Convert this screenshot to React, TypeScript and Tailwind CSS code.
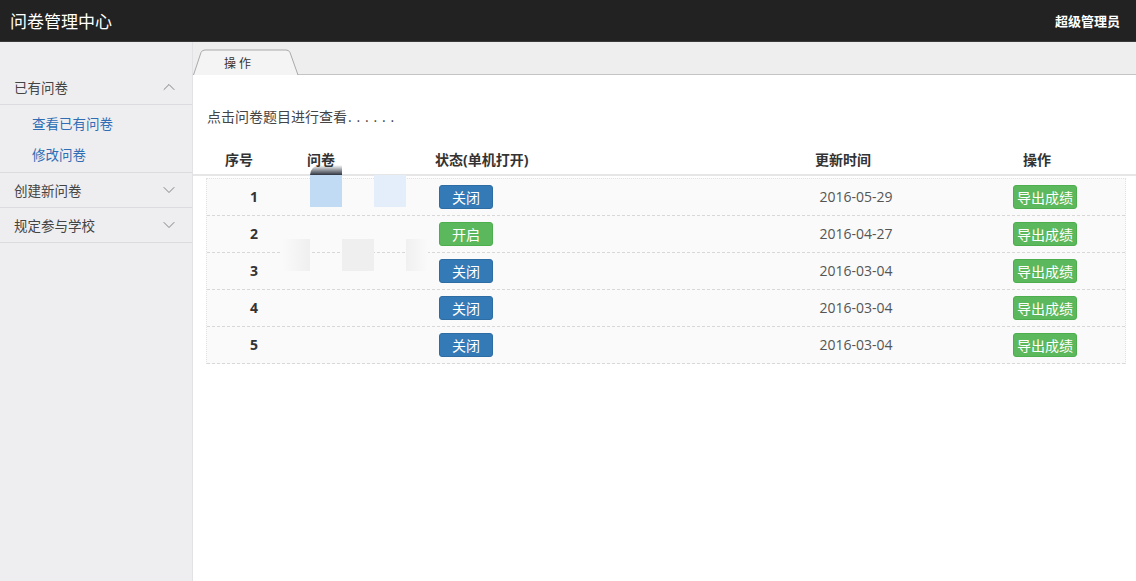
import React from "react";
import { ChevronUp, ChevronDown } from "lucide-react";

const rows = [
  { n: 1, on: false, d: "2016-05-29" },
  { n: 2, on: true, d: "2016-04-27" },
  { n: 3, on: false, d: "2016-03-04" },
  { n: 4, on: false, d: "2016-03-04" },
  { n: 5, on: false, d: "2016-03-04" },
];

function SideRow({ label, open }: { label: string; open?: boolean }) {
  return (
    <div className="h-[35px] border-b border-[#dcdce0] flex items-center justify-between pl-[14px] pr-[13px] text-[13.5px] text-[#444]">
      <span>{label}</span>
      {open ? (
        <ChevronUp size={20} strokeWidth={1.1} color="#777" />
      ) : (
        <ChevronDown size={20} strokeWidth={1.1} color="#777" />
      )}
    </div>
  );
}

export default function App() {
  return (
    <div className="w-[1136px] h-[581px] overflow-hidden flex flex-col font-['Open_Sans','Noto_Sans_CJK_SC',sans-serif] bg-white">
      {/* top bar */}
      <div className="h-[42px] shrink-0 bg-[#222222] border-b border-[#3a3a3a] flex items-center justify-between pl-[10px] pr-[16px]">
        <span className="text-white text-[17px] font-['Noto_Sans_CJK_SC',sans-serif]">问卷管理中心</span>
        <span className="text-white text-[13px] font-bold font-['Noto_Sans_CJK_SC',sans-serif]">超级管理员</span>
      </div>
      <div className="flex flex-1 min-h-0">
        {/* sidebar */}
        <div className="w-[193px] shrink-0 bg-[#eeeef0] border-r border-[#e2e2e4] pt-[28px] font-['Noto_Sans_CJK_SC',sans-serif]">
          <SideRow label="已有问卷" open />
          <div className="pt-[3px] pb-[2px] border-b border-[#dcdce0]">
            <div className="h-[31px] flex items-center pl-[32px] text-[13.5px] text-[#2f6db5]">查看已有问卷</div>
            <div className="h-[31px] flex items-center pl-[32px] text-[13.5px] text-[#2f6db5]">修改问卷</div>
          </div>
          <SideRow label="创建新问卷" />
          <SideRow label="规定参与学校" />
        </div>
        {/* content */}
        <div className="flex-1 flex flex-col relative">
          <div className="h-[33px] shrink-0 bg-[#eeeeee] border-b border-[#c4c4c4] flex items-end">
            <div className="relative w-[106px] h-[26px] -mb-px">
              <svg className="absolute inset-0" width="106" height="26" viewBox="0 0 106 26">
                <path d="M0.5 26 L8 3.5 Q9 1 12 1 L93 1 Q96 1 97 3.5 L105 26" fill="#f4f4f4" stroke="#a9a9a9" strokeWidth="1" />
              </svg>
              <div className="relative h-full flex items-center pl-[31px] pt-[2px] text-[12px] tracking-[3px] text-[#333] font-['Noto_Sans_CJK_SC',sans-serif]">
                操作
              </div>
            </div>
          </div>
          <div className="pl-[14px] mt-[31px] h-[20px] flex items-center text-[14px] text-[#444]">
            <span>点击问卷题目进行查看</span>
            <span className="tracking-[4.8px] ml-[1px]">......</span>
          </div>
          {/* header */}
          <div className="mt-[18px] h-[32px] border-b-2 border-[#e6e6e6] grid grid-cols-[92px_150px_300px_216px_172px] items-center text-[14px] font-bold text-[#333]">
            <div className="text-center">序号</div>
            <div className="pl-[22px]">问卷</div>
            <div>状态(单机打开)</div>
            <div className="text-center">更新时间</div>
            <div className="text-center">操作</div>
          </div>
          {/* body */}
          <div className="mt-[2px] ml-[13px] mr-[10px] border border-dotted border-b-0 border-[#e2e2e2] bg-[#fafafa]">
            {rows.map((r) => (
              <div
                key={r.n}
                className="h-[37px] border-b border-dashed border-[#d8d8d8] grid grid-cols-[94px_138px_300px_234px_1fr] items-center"
              >
                <div className="text-center text-[14px] font-bold text-[#333] -mt-[2px]">{r.n}</div>
                <div />
                <div>
                  <span
                    className={
                      r.on
                        ? "inline-flex items-center justify-center w-[54px] h-[24px] rounded-[3px] bg-[#5cb85c] border border-[#4cae4c] text-white text-[14px] font-['Noto_Sans_CJK_SC',sans-serif]"
                        : "inline-flex items-center justify-center w-[54px] h-[24px] rounded-[3px] bg-[#337ab7] border border-[#2e6da4] text-white text-[14px] font-['Noto_Sans_CJK_SC',sans-serif]"
                    }
                  >
                    {r.on ? "开启" : "关闭"}
                  </span>
                </div>
                <div className="text-center text-[14px] text-[#555] -mt-[2px]">{r.d}</div>
                <div className="pl-[40px]">
                  <span className="inline-flex items-center justify-center w-[64px] h-[24px] rounded-[3px] bg-[#5cb85c] border border-[#4cae4c] text-white text-[14px] font-['Noto_Sans_CJK_SC',sans-serif]">
                    导出成绩
                  </span>
                </div>
              </div>
            ))}
          </div>
          {/* redaction blocks over the question column */}
          <div className="absolute left-[117px] top-[123px] w-[32px] h-[10px] bg-gradient-to-b from-transparent to-[#2d3440] rounded-tl-[16px]" />
          <div className="absolute left-[117px] top-[133px] w-[32px] h-[32px] bg-[#c0dbf3]" />
          <div className="absolute left-[181px] top-[133px] w-[32px] h-[32px] bg-[#e3eefa]" />
          <div className="absolute left-[89px] top-[197px] w-[28px] h-[32px] bg-gradient-to-r from-[#fafafa] to-[#efefef]" />
          <div className="absolute left-[149px] top-[197px] w-[32px] h-[32px] bg-[#efefef]" />
          <div className="absolute left-[213px] top-[197px] w-[22px] h-[32px] bg-gradient-to-r from-[#f0f0f0] to-[#fafafa]" />
        </div>
      </div>
    </div>
  );
}
